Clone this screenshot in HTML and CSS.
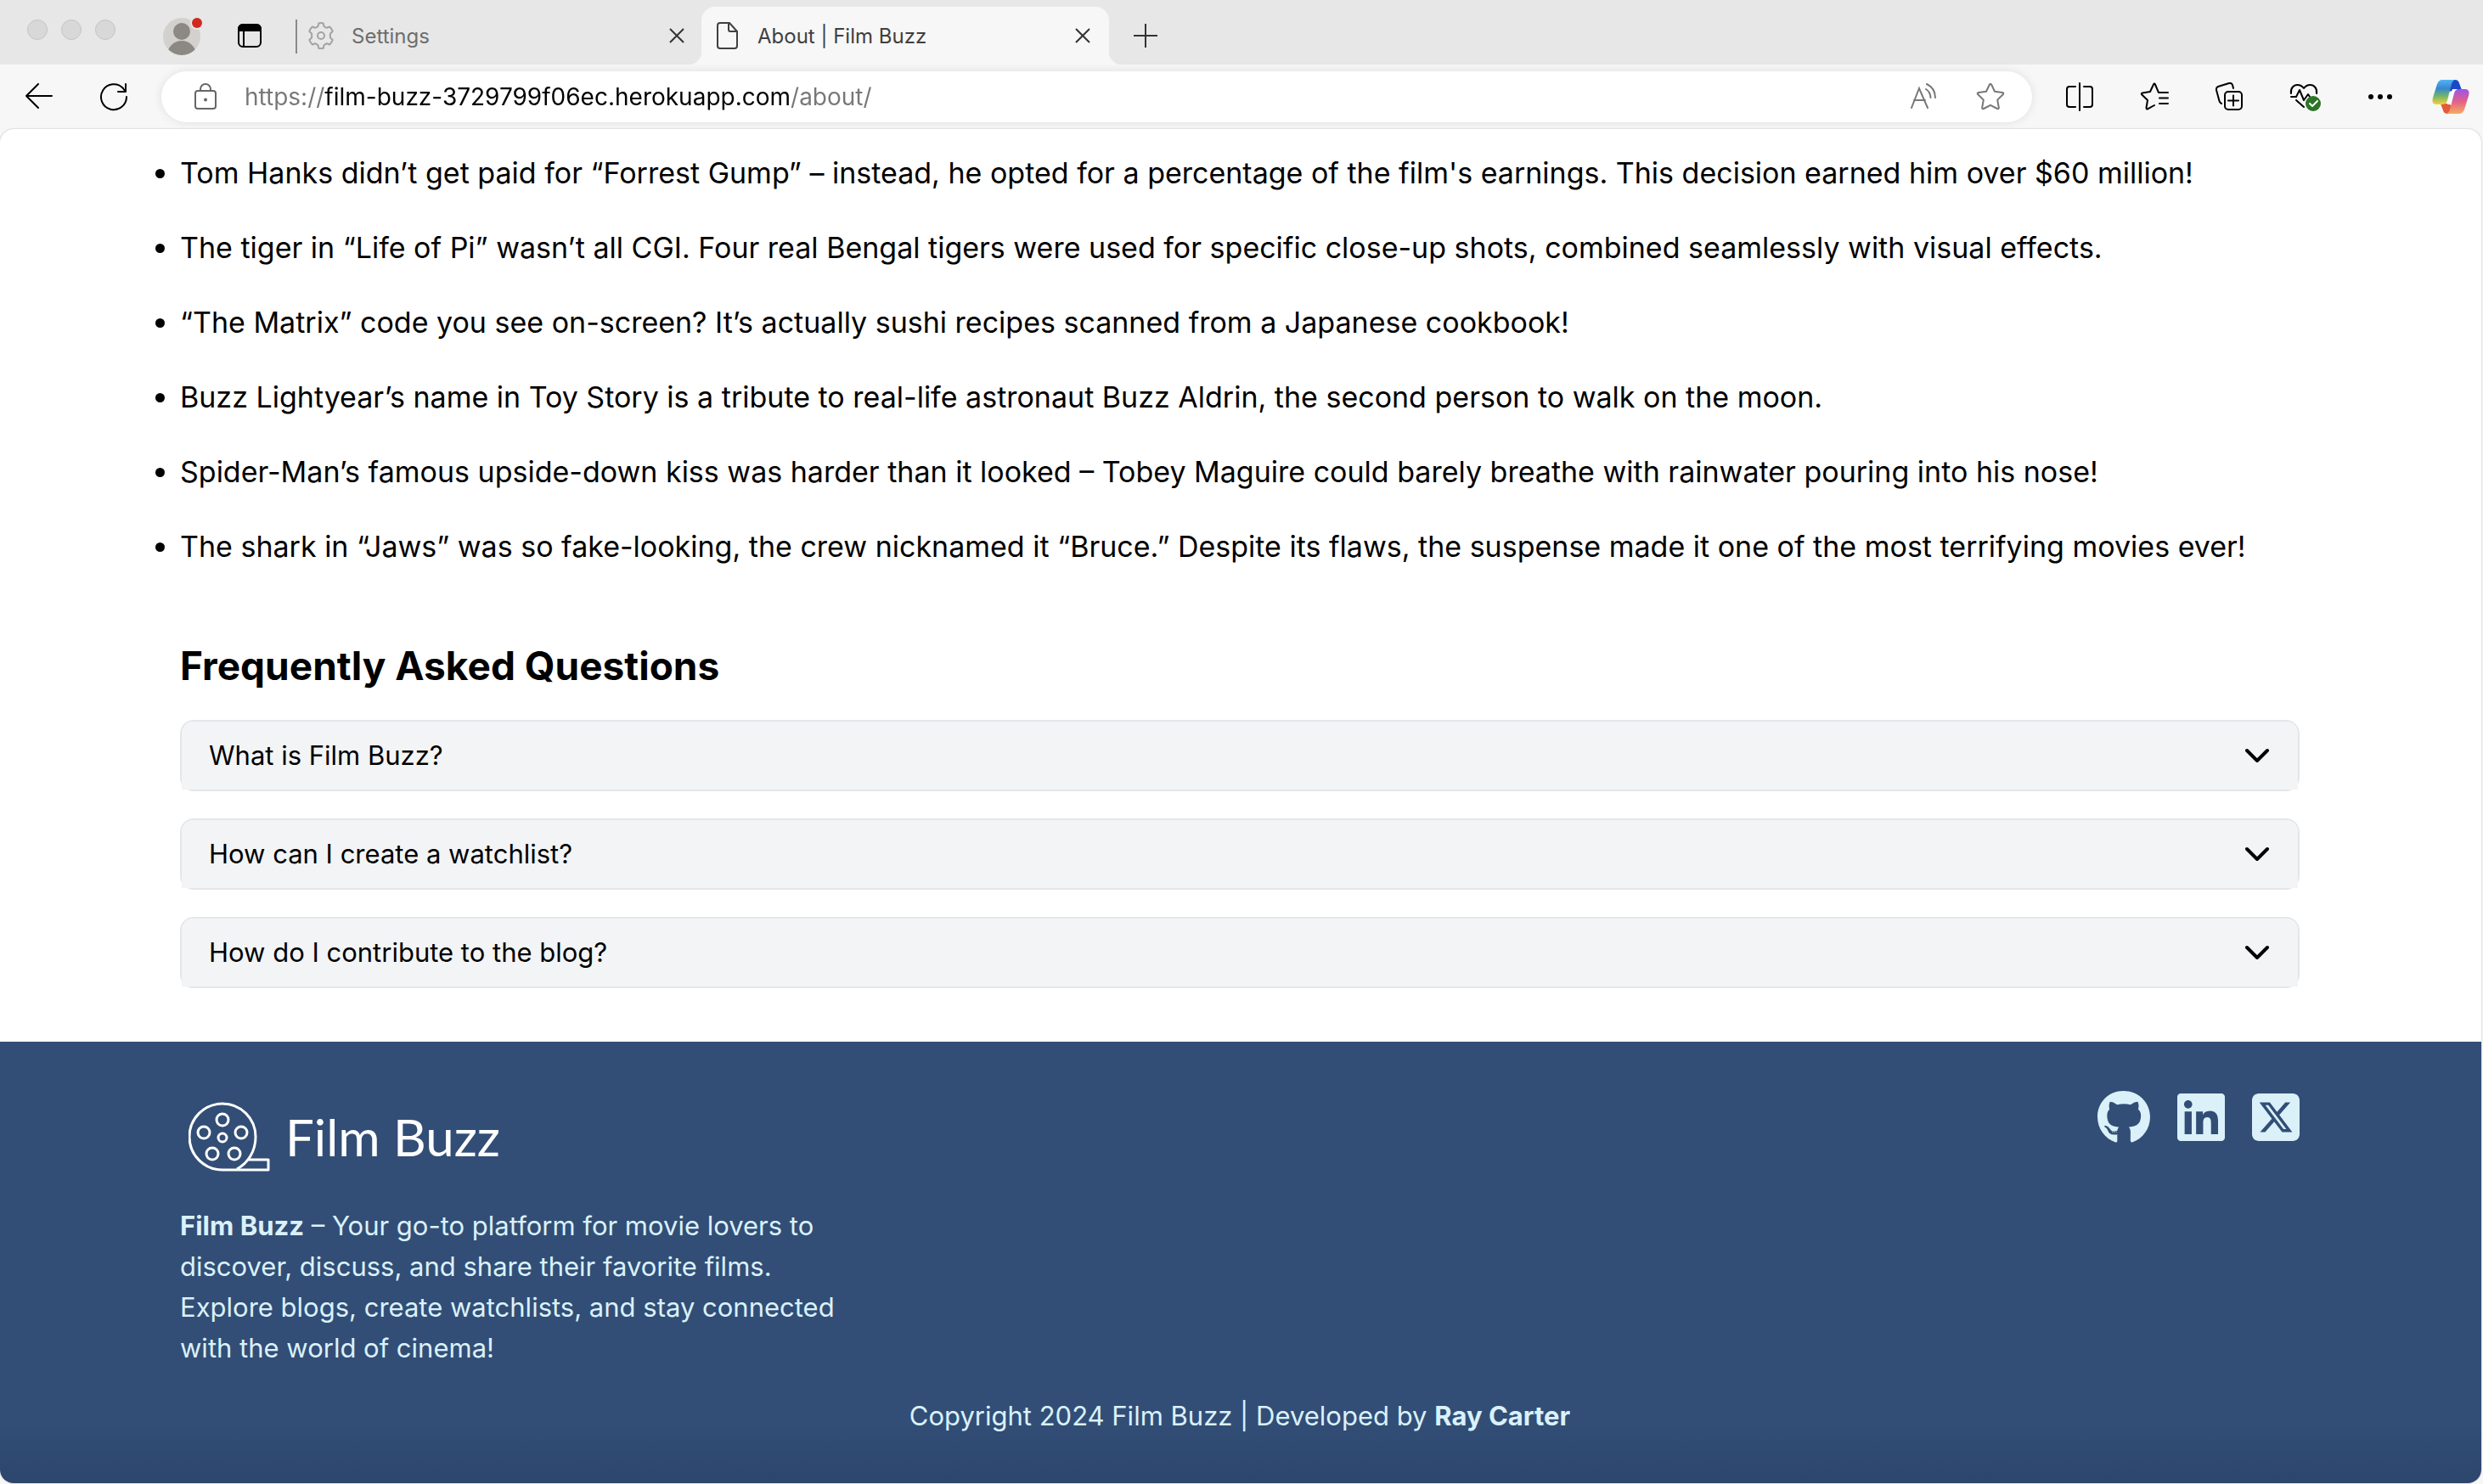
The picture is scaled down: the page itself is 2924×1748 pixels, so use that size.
FILE: index.html
```html
<!DOCTYPE html>
<html lang="en">
<head>
<meta charset="utf-8">
<title>About | Film Buzz</title>
<link rel="stylesheet" href="styles.css">
</head>
<body>
<header class="browser">
  <div class="tabstrip">
    <div class="lights"><span class="light"></span><span class="light"></span><span class="light"></span></div>
    <button class="icon-btn profile" aria-label="Profile">
      <svg width="48" height="48" viewBox="0 0 48 48"><defs><clipPath id="face"><circle cx="22" cy="25" r="22"/></clipPath></defs><circle cx="22" cy="25" r="22" fill="#d3d1cd"/><g clip-path="url(#face)" fill="#8c8884"><circle cx="22" cy="19" r="10"/><circle cx="22" cy="47" r="17"/></g><circle cx="40" cy="9" r="8" fill="#e7e7e7"/><circle cx="40" cy="9" r="6" fill="#d02a1e"/></svg>
    </button>
    <button class="icon-btn sidebar" aria-label="Tab actions">
      <svg width="28" height="28" viewBox="0 0 28 28" fill="none" stroke="#000" stroke-width="2"><rect x="1" y="1" width="26" height="26" rx="5"/><path d="M1 8V6a5 5 0 0 1 5-5h16a5 5 0 0 1 5 5v2z" fill="#000"/><path d="M7 8v19"/></svg>
    </button>
    <span class="divider"></span>
    <div class="tab">
      <svg width="32" height="32" viewBox="0 0 32 32" fill="none" stroke="#a3a3a3" stroke-width="2" stroke-linejoin="round"><path d="M12.500 5 13.200 1.500Q16 .500 18.800 1.500L19.500 5Q21 6.200 22.800 6.700L26.200 5.500Q28.800 8 29.700 11L27 13.500Q26.600 16 27 18.500L29.700 21Q28.800 24 26.200 26.500L22.800 25.300Q21 26 19.500 27.300L18.800 30.700Q16 31.400 13.200 30.700L12.500 27.300Q11 26 9.200 25.300L5.800 26.500Q3.200 24 2.300 21L5 18.500Q5.400 16 5 13.500L2.300 11Q3.200 8 5.800 5.500L9.200 6.700Q11 6.200 12.500 5Z"/><circle cx="16" cy="16" r="4"/></svg>
      <span class="tab-title">Settings</span>
      <button class="icon-btn" aria-label="Close Settings tab"><svg width="18" height="18" viewBox="0 0 18 18" stroke="#333" stroke-width="2"><path d="M1 1 17 17M17 1 1 17"/></svg></button>
    </div>
    <div class="tab tab-active">
      <svg width="26" height="34" viewBox="0 0 26 34" fill="none" stroke="#404040" stroke-width="2" stroke-linejoin="round"><path d="M4 2h11l9 10v17a3 3 0 0 1-3 3H4a3 3 0 0 1-3-3V5a3 3 0 0 1 3-3zM14 2v8a2 2 0 0 0 2 2h8"/></svg>
      <span class="tab-title">About | Film Buzz</span>
      <button class="icon-btn" aria-label="Close About tab"><svg width="18" height="18" viewBox="0 0 18 18" stroke="#333" stroke-width="2"><path d="M1 1 17 17M17 1 1 17"/></svg></button>
    </div>
    <button class="icon-btn new-tab" aria-label="New tab"><svg width="28" height="28" viewBox="0 0 28 28" stroke="#333" stroke-width="2"><path d="M14 0v28M0 14h28"/></svg></button>
  </div>
  <div class="toolbar">
    <button class="icon-btn" aria-label="Back"><svg width="32" height="32" viewBox="0 0 32 32" fill="none" stroke="#000" stroke-width="2" stroke-linecap="round" stroke-linejoin="round"><path d="M31 15H1M15 1 1 15l14 14"/></svg></button>
    <button class="icon-btn reload" aria-label="Reload"><svg width="34" height="34" viewBox="0 0 34 34" fill="none" stroke="#000" stroke-width="2" stroke-linecap="round" stroke-linejoin="round"><path d="M32 17A15 15 0 1 1 28 7M31 2v9h-9M31 11l-4-5"/></svg></button>
    <div class="address">
      <svg width="26" height="32" viewBox="0 0 26 32" fill="none" stroke="#666" stroke-width="2"><rect x="1" y="9" width="24" height="21" rx="3"/><path d="M7 9V7a6 6 0 0 1 12 0v2"/><circle cx="13" cy="19.500" r="2" fill="#666" stroke="none"/></svg>
      <input class="url" type="text" aria-label="Address" value="https://film-buzz-3729799f06ec.herokuapp.com/about/">
      <button class="icon-btn" aria-label="Read aloud"><svg width="34" height="32" viewBox="0 0 34 32" fill="none" stroke="#777" stroke-width="2" stroke-linecap="round"><path d="M2 29 11 6l10 23M5 20h13M19 7q5 3 5.500 10M20 1q10 5 10 16"/></svg></button>
      <button class="icon-btn star" aria-label="Add to favorites"><svg width="34" height="34" viewBox="0 0 34 34" fill="none" stroke="#777" stroke-width="2" stroke-linejoin="round"><path d="M15.800 2.800Q17 .600 18.200 2.800L22 10.800l9 1.300q2.200.500.700 2.200L25.200 20.600l1.600 9q.200 2.200-1.800 1.400L17 26.800 9 31q-2 .800-1.800-1.400l1.600-9L2.300 14.300q-1.500-1.700.7-2.200l9-1.300z"/></svg></button>
    </div>
    <div class="tools">
      <button class="icon-btn" aria-label="Split screen"><svg width="34" height="34" viewBox="0 0 34 34" fill="none" stroke="#000" stroke-width="2" stroke-linecap="round"><path d="M17 1v32M12 5H5a3 3 0 0 0-3 3v18a3 3 0 0 0 3 3h7M22 5h7a3 3 0 0 1 3 3v18a3 3 0 0 1-3 3h-7"/></svg></button>
      <button class="icon-btn" aria-label="Favorites"><svg width="34" height="34" viewBox="0 0 34 34" fill="none" stroke="#000" stroke-width="2" stroke-linecap="round" stroke-linejoin="round"><path d="M33 12H22L18 2.500q-1-1.800-2 0L12 11l-9 1.500q-2 .500-.700 2L9 21 7.500 30q0 2 2 1.200L17 27M23 18.500h10M23 25h10"/></svg></button>
      <button class="icon-btn" aria-label="Collections"><svg width="34" height="34" viewBox="0 0 34 34" fill="none" stroke="#000" stroke-width="2" stroke-linecap="round" stroke-linejoin="round"><rect x="12" y="11" width="20" height="21" rx="4"/><path d="M22 15.500v12M16 21.500h12M8 25q-2-1-2.500-3L2 9Q1.500 6 4 5l13-4q3-.500 4 2l1 4"/></svg></button>
      <button class="icon-btn" aria-label="Browser essentials"><svg width="38" height="34" viewBox="0 0 38 34" fill="none" stroke="#000" stroke-width="2" stroke-linecap="round" stroke-linejoin="round"><path d="M2 13C1 7 5 3 9.500 3Q14 3 17 7q3-4 7.500-4C29 3 33 7 32 13M2 17h6l4-8 5 12 5-7 2 3M8 21l9 8"/><circle cx="28" cy="25" r="9" fill="#2c7526" stroke="none"/><path d="m24 25 3 3 6-6" stroke="#fff"/></svg></button>
      <button class="icon-btn" aria-label="More"><svg width="30" height="34" viewBox="2 0 30 34"><circle cx="6" cy="17" r="3"/><circle cx="17" cy="17" r="3"/><circle cx="28" cy="17" r="3"/></svg></button>
      <button class="icon-btn copilot" aria-label="Copilot"><svg width="44" height="42" viewBox="0 0 44 42"><defs><linearGradient id="cl" x1="0" y1="0" x2="0" y2="1"><stop offset="0" stop-color="#4fb4f5"/><stop offset=".35" stop-color="#3a86d0"/><stop offset=".65" stop-color="#6db56b"/><stop offset="1" stop-color="#f8cf3a"/></linearGradient><linearGradient id="cr" x1="0" y1="0" x2="0" y2="1"><stop offset="0" stop-color="#9d55e6"/><stop offset=".5" stop-color="#e2608a"/><stop offset="1" stop-color="#f6ab5c"/></linearGradient></defs><path d="M22 1h5q4 0 5 4l3 8h-8l-7 2z" fill="#1b48c4"/><path d="M21 41h-3q-4 0-5-4l-3-8h10l4 4z" fill="#e35b3a"/><path d="M24 12h6l-5 18h-7z" fill="#fbfafa"/><path d="M12 1h15q-3 1-4 5l-5 19q-1 5-6 5H5q-6 0-4-8L6 6q2-5 6-5z" fill="url(#cl)"/><path d="M32 41H17q3-1 4-5l5-19q1-5 6-5h7q6 0 4 8l-5 16q-2 5-6 5z" fill="url(#cr)"/></svg></button>
    </div>
  </div>
</header>
<div class="page">
  <main class="content">
    <ul class="facts">
      <li>Tom Hanks didn’t get paid for “Forrest Gump” – instead, he opted for a percentage of the film's earnings. This decision earned him over $60 million!</li>
      <li>The tiger in “Life of Pi” wasn’t all CGI. Four real Bengal tigers were used for specific close-up shots, combined seamlessly with visual effects.</li>
      <li>“The Matrix” code you see on-screen? It’s actually sushi recipes scanned from a Japanese cookbook!</li>
      <li>Buzz Lightyear’s name in Toy Story is a tribute to real-life astronaut Buzz Aldrin, the second person to walk on the moon.</li>
      <li>Spider-Man’s famous upside-down kiss was harder than it looked – Tobey Maguire could barely breathe with rainwater pouring into his nose!</li>
      <li>The shark in “Jaws” was so fake-looking, the crew nicknamed it “Bruce.” Despite its flaws, the suspense made it one of the most terrifying movies ever!</li>
    </ul>
    <h2 class="faq-heading">Frequently Asked Questions</h2>
    <div class="faq">
      <div class="faq-item"><button class="faq-question" aria-expanded="false">What is Film Buzz?<svg width="28" height="18" viewBox="0 0 28 18" fill="none" stroke="#000" stroke-width="4" stroke-linecap="round" stroke-linejoin="round"><path d="m2 3 12 12L26 3"/></svg></button></div>
      <div class="faq-item"><button class="faq-question" aria-expanded="false">How can I create a watchlist?<svg width="28" height="18" viewBox="0 0 28 18" fill="none" stroke="#000" stroke-width="4" stroke-linecap="round" stroke-linejoin="round"><path d="m2 3 12 12L26 3"/></svg></button></div>
      <div class="faq-item"><button class="faq-question" aria-expanded="false">How do I contribute to the blog?<svg width="28" height="18" viewBox="0 0 28 18" fill="none" stroke="#000" stroke-width="4" stroke-linecap="round" stroke-linejoin="round"><path d="m2 3 12 12L26 3"/></svg></button></div>
    </div>
  </main>
  <footer class="footer">
    <div class="footer-top">
      <div class="about">
        <a class="logo" href="#">
          <svg width="96" height="82" viewBox="0 0 96 82" fill="none" stroke="#fff" stroke-width="3" stroke-linejoin="round"><path d="M57 79C70 72 79 58 79 41A39 39 0 1 0 40 80H94V68H69"/><circle cx="40" cy="21" r="7"/><circle cx="18" cy="36" r="7"/><circle cx="62" cy="36" r="7"/><circle cx="28" cy="61" r="7"/><circle cx="54" cy="61" r="7"/><circle cx="40" cy="42" r="5"/></svg>
          <span>Film Buzz</span>
        </a>
        <p class="blurb"><strong>Film Buzz</strong> – Your go-to platform for movie lovers to discover, discuss, and share their favorite films. Explore blogs, create watchlists, and stay connected with the world of cinema!</p>
      </div>
      <nav class="social" aria-label="Social links">
        <a href="#" aria-label="GitHub"><svg width="62" height="64" viewBox="0 0 496 512"><path d="M165.900 397.400c0 2-2.300 3.600-5.200 3.600-3.300.3-5.600-1.300-5.600-3.600 0-2 2.300-3.600 5.200-3.600 3-.3 5.600 1.300 5.600 3.600zm-31.100-4.500c-.7 2 1.300 4.300 4.300 4.900 2.600 1 5.600 0 6.200-2s-1.300-4.300-4.300-5.200c-2.600-.7-5.500.3-6.200 2.300zm44.200-1.700c-2.900.7-4.900 2.600-4.600 4.900.3 2 2.900 3.300 5.900 2.600 2.900-.7 4.900-2.600 4.600-4.600-.3-1.900-3-3.200-5.900-2.900zM244.800 8C106.100 8 0 113.300 0 252c0 110.900 69.800 205.800 169.500 239.200 12.800 2.300 17.300-5.600 17.300-12.100 0-6.200-.3-40.400-.3-61.400 0 0-70 15-84.700-29.800 0 0-11.400-29.100-27.800-36.600 0 0-22.900-15.700 1.600-15.400 0 0 24.900 2 38.600 25.800 21.900 38.600 58.600 27.500 72.900 20.900 2.300-16 8.800-27.100 16-33.700-55.900-6.200-112.300-14.300-112.300-110.500 0-27.500 7.600-41.300 23.600-58.900-2.600-6.500-11.100-33.300 2.600-67.900 20.900-6.500 69 27 69 27 20-5.600 41.500-8.500 62.800-8.500s42.800 2.900 62.800 8.500c0 0 48.100-33.600 69-27 13.700 34.700 5.200 61.400 2.600 67.900 16 17.700 25.800 31.500 25.800 58.900 0 96.500-58.900 104.200-114.800 110.500 9.200 7.900 17 22.900 17 46.400 0 33.700-.3 75.400-.3 83.600 0 6.500 4.600 14.400 17.300 12.100C428.200 457.800 496 362.900 496 252 496 113.300 383.500 8 244.800 8z"/></svg></a>
        <a href="#" aria-label="LinkedIn"><svg width="56" height="64" viewBox="0 0 448 512"><path d="M416 32H31.900C14.300 32 0 46.500 0 64.300v383.400C0 465.500 14.300 480 31.900 480H416c17.600 0 32-14.500 32-32.300V64.300c0-17.800-14.400-32.300-32-32.300zM135.400 416H69V202.200h66.500V416zm-33.200-243c-21.300 0-38.500-17.300-38.500-38.500S80.900 96 102.200 96c21.200 0 38.500 17.300 38.500 38.500 0 21.300-17.200 38.500-38.500 38.500zm282.100 243h-66.400V312c0-24.800-.5-56.700-34.500-56.700-34.600 0-39.900 27-39.900 54.900V416h-66.400V202.200h63.700v29.200h.9c8.900-16.800 30.600-34.500 62.900-34.500 67.200 0 79.700 44.300 79.700 101.900V416z"/></svg></a>
        <a href="#" aria-label="X"><svg width="56" height="64" viewBox="0 0 448 512"><path d="M64 32C28.700 32 0 60.700 0 96V416c0 35.300 28.700 64 64 64H384c35.300 0 64-28.700 64-64V96c0-35.300-28.700-64-64-64H64zm297.100 84L257.300 234.600 379.400 396H283.800L209 298.100 123.300 396H75.800l111-126.900L69.700 116h98l67.700 89.500L313.600 116h47.500zM323.300 367.600L153.400 142.900H125.100L296.900 367.600h26.300z"/></svg></a>
      </nav>
    </div>
    <p class="copyright">Copyright 2024 Film Buzz | Developed by <strong>Ray Carter</strong></p>
  </footer>
</div>
</body>
</html>
```
FILE: styles.css
```css
* { box-sizing: border-box; }

body {
  margin: 0;
  min-height: 100vh;
  display: flex;
  flex-direction: column;
  background: #f7f7f7;
  color: #000;
  font-family: Inter, "Liberation Sans", sans-serif;
}

svg { display: block; flex: none; }

.icon-btn {
  display: grid;
  place-items: center;
  flex: none;
  padding: 0;
  border: 0;
  background: none;
}

/* Browser window */
.tabstrip {
  display: flex;
  align-items: flex-end;
  height: 76px;
  padding-left: 32px;
  background: #e7e7e7;
}

.lights {
  display: flex;
  align-self: flex-start;
  gap: 16px;
  padding-top: 23px;
}

.light {
  width: 24px;
  height: 24px;
  border: 1px solid #c4c4c4;
  border-radius: 50%;
  background: #d8d8d8;
}

.profile { height: 68px; margin-left: 56px; }
.sidebar { height: 68px; margin-left: 40px; }
.divider { width: 2px; height: 40px; margin: 0 12px 13px 40px; background: #8a8a8a; }

.tab {
  display: flex;
  align-items: center;
  gap: 20px;
  flex: 0 1 464px;
  height: 68px;
  padding-right: 20px;
  color: #6e6e6e;
  font-size: 24px;
}

.tab-title { flex: 1; }

.tab-active {
  position: relative;
  flex-basis: 480px;
  gap: 22px;
  padding: 0 22px 0 18px;
  border-radius: 16px 16px 0 0;
  background: #f7f7f7;
  color: #404040;
}

.tab-active::before,
.tab-active::after {
  content: "";
  position: absolute;
  bottom: 0;
  width: 16px;
  height: 16px;
}

.tab-active::before {
  right: 100%;
  background: radial-gradient(circle at 0 0, #e7e7e7 16px, #f7f7f7 17px);
}

.tab-active::after {
  left: 100%;
  background: radial-gradient(circle at 100% 0, #e7e7e7 16px, #f7f7f7 17px);
}

.new-tab { height: 68px; margin-left: 29px; }

.toolbar {
  display: flex;
  align-items: center;
  height: 76px;
  padding: 0 16px 0 30px;
}

.reload { margin-left: 55px; }

.address {
  display: flex;
  align-items: center;
  flex: 1;
  height: 60px;
  margin: 0 39px;
  padding: 0 32px 0 39px;
  border-radius: 30px;
  background: #fff;
  box-shadow: 0 0 12px rgba(0, 0, 0, 0.1);
}

.url {
  flex: 1;
  height: 60px;
  margin-left: 33px;
  padding: 0;
  border: 0;
  outline: 0;
  color: transparent;
  background: linear-gradient(90deg, #777 94px, #000 94px, #000 641px, #777 641px);
  background-clip: text;
  -webkit-background-clip: text;
  font: 28px Inter, "Liberation Sans", sans-serif;
}

.star { margin-left: 44px; }

.tools { display: flex; align-items: center; gap: 54px; }
.copilot { margin-left: -8px; }

/* Page */
.page {
  display: flex;
  flex-direction: column;
  flex: 1;
  margin: 0 2px 1px 0;
  overflow: hidden;
  border-radius: 16px;
  background: #fff;
  box-shadow: 0 0 2px rgba(0, 0, 0, 0.3);
}

.content { padding: 24px 214px 63px 212px; }

.facts {
  display: flex;
  flex-direction: column;
  gap: 32px;
  margin: 0;
  padding: 0;
  font-size: 34px;
  line-height: 56px;
}

.faq-heading {
  margin: 82px 0 34px;
  font-size: 46px;
  line-height: 60px;
}

.faq { display: flex; flex-direction: column; gap: 32px; }

.faq-item {
  border: 2px solid #e4e6e9;
  border-radius: 16px;
}

.faq-question {
  display: flex;
  align-items: center;
  justify-content: space-between;
  width: 100%;
  height: 80px;
  padding: 0 34px 0 32px;
  border: 0;
  border-radius: 14px 14px 0 0;
  background: #f3f4f6;
  color: #000;
  font: 31px/48px Inter, "Liberation Sans", sans-serif;
}

/* Footer */
.footer {
  flex: 1;
  padding: 57px 214px 48px 212px;
  background: linear-gradient(to top, #2c466c, #324e76 72px);
  color: #daf1fa;
  font-size: 31px;
  line-height: 48px;
}

.footer-top { display: flex; justify-content: space-between; }

.about { flex: 0 1 792px; }

.logo {
  display: flex;
  align-items: center;
  gap: 18px;
  padding: 14px 0 40px 10px;
  color: #fff;
  font-family: Lato, sans-serif;
  font-size: 60px;
  line-height: 82px;
  text-decoration: none;
}

.blurb { margin: 0; }

.social { display: flex; align-items: flex-start; gap: 32px; }
.social a { fill: currentColor; color: inherit; }

.copyright { margin: 32px 0 0; text-align: center; }
```
